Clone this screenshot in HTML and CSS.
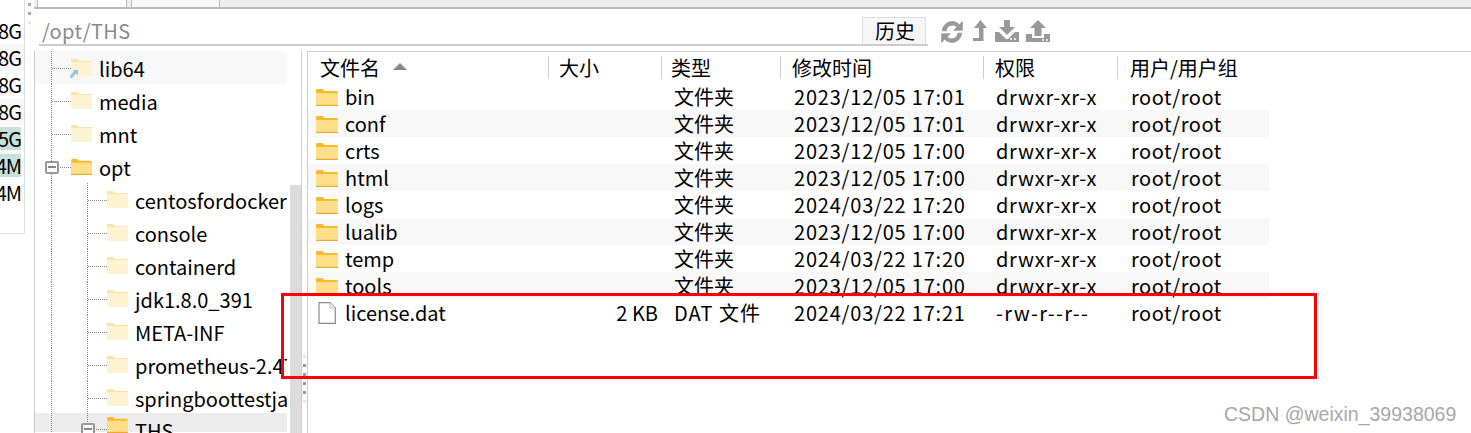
FILE: index.html
```html
<!DOCTYPE html>
<html lang="zh">
<head>
<meta charset="utf-8">
<title>/opt/THS</title>
<link rel="stylesheet" href="styles.css">
</head>
<body>
<svg class="defs" width="0" height="0" aria-hidden="true">
  <defs>
    <symbol id="folder" viewBox="0 0 22 18">
      <path d="M0 2.5C0 1.6.6 1 1.500 1h5L8.500 3H20.500C21.400 3 22 3.600 22 4.500V16.500C22 17.400 21.400 18 20.500 18H1.500C.6 18 0 17.400 0 16.500Z" fill="#fdb92e"/>
      <path d="M0 5H22V16.500C22 17.400 21.400 18 20.500 18H1.500C.6 18 0 17.400 0 16.500Z" fill="#fddf8a"/>
      <path d="M0 16.800H22V18H0Z" fill="#eeaa2e"/>
    </symbol>
    <symbol id="folder-pale" viewBox="0 0 21 17">
      <path d="M0 0H6L8 2H21V4H0Z" fill="#fbe3a6"/>
      <path d="M0 3H21V17H0Z" fill="#fef3d0"/>
    </symbol>
  </defs>
</svg>
<div class="app">
  <aside class="strip">
    <div class="usage"><span>8G</span></div>
    <div class="usage alt"><span>8G</span></div>
    <div class="usage"><span>8G</span></div>
    <div class="usage alt"><span>8G</span></div>
    <div class="usage hot"><span>5G</span></div>
    <div class="usage hot"><span>4M</span></div>
    <div class="usage"><span>4M</span></div>
  </aside>
  <div class="grip top-grip"><i></i><i></i><i></i></div>
  <main class="content">
    <div class="tabs"><div class="tab"></div><div class="tab"></div></div>
    <div class="toolbar">
      <div class="pathrow">
        <div class="path">/opt/THS</div>
        <button class="history">历史</button>
      </div>
      <div class="tools">
        <svg class="tool refresh" viewBox="2 2 18 18"><path d="M3 10C3.500 5.500 7 2.500 11 2.500C13.500 2.500 15.500 3.500 17 5L19.500 2.500V9.500H12.500L15 7C13.800 5.900 12.500 5.400 11 5.400C8.500 5.400 6.600 7.300 6.200 10ZM19 12C18.500 16.500 15 19.500 11 19.500C8.500 19.500 6.500 18.500 5 17L2.500 19.500V12.500H9.500L7 15C8.200 16.100 9.500 16.600 11 16.600C13.500 16.600 15.400 14.700 15.800 12Z"/></svg>
        <svg class="tool up" viewBox="0 0 14 21"><path d="M7.500 0L14 8H10.500V21H0V18H6V8H1Z"/></svg>
        <svg class="tool down" viewBox="0 0 24 22"><path d="M9 0H15V7H20L12 15L4 7H9ZM0 12H4L11 19H13L20 12H24V22H0Z"/><circle cx="16" cy="19" r="1" fill="#fff"/><circle cx="20" cy="19" r="1" fill="#fff"/></svg>
        <svg class="tool upl" viewBox="0 0 24 22"><path d="M12 0L20 8H15.500V16H8.500V8H4ZM0 14H6V18H18V14H24V22H0Z"/><circle cx="17" cy="20" r="1" fill="#fff"/><circle cx="21" cy="20" r="1" fill="#fff"/></svg>
      </div>
    </div>
    <div class="panes">
      <nav class="tree">
        <div class="node lv1 hover"><span class="tw"></span><span class="ico"><svg class="fi"><use href="#folder-pale"/></svg><svg class="link" viewBox="0 0 8 8"><path d="M3 0H8V5L6 3.500L2 8H0C0 5 1.500 3 4 2Z"/></svg></span><span class="label">lib64</span></div>
        <div class="node lv1"><span class="tw"></span><span class="ico"><svg class="fi"><use href="#folder-pale"/></svg></span><span class="label">media</span></div>
        <div class="node lv1"><span class="tw"></span><span class="ico"><svg class="fi"><use href="#folder-pale"/></svg></span><span class="label">mnt</span></div>
        <div class="node lv1 open"><span class="tw"><b class="minus"></b></span><span class="ico"><svg class="fi"><use href="#folder"/></svg></span><span class="label">opt</span></div>
        <div class="node lv2"><span class="tw"></span><span class="ico"><svg class="fi"><use href="#folder-pale"/></svg></span><span class="label">centosfordocker</span></div>
        <div class="node lv2"><span class="tw"></span><span class="ico"><svg class="fi"><use href="#folder-pale"/></svg></span><span class="label">console</span></div>
        <div class="node lv2"><span class="tw"></span><span class="ico"><svg class="fi"><use href="#folder-pale"/></svg></span><span class="label">containerd</span></div>
        <div class="node lv2"><span class="tw"></span><span class="ico"><svg class="fi"><use href="#folder-pale"/></svg></span><span class="label">jdk1.8.0_391</span></div>
        <div class="node lv2"><span class="tw"></span><span class="ico"><svg class="fi"><use href="#folder-pale"/></svg></span><span class="label">META-INF</span></div>
        <div class="node lv2"><span class="tw"></span><span class="ico"><svg class="fi"><use href="#folder-pale"/></svg></span><span class="label">prometheus-2.47.0</span></div>
        <div class="node lv2"><span class="tw"></span><span class="ico"><svg class="fi"><use href="#folder-pale"/></svg></span><span class="label">springboottestjar</span></div>
        <div class="node lv2 open selected"><span class="tw"><b class="minus"></b></span><span class="ico"><svg class="fi"><use href="#folder"/></svg></span><span class="label">THS</span></div>
      </nav>
      <div class="vscroll"><div class="thumb"></div></div>
      <div class="grip mid-grip"><i></i><i></i><i></i><i></i><i></i><i></i></div>
      <section class="files">
        <div class="frow head">
          <div class="c1">文件名<span class="sort"></span></div>
          <div class="c2">大小</div>
          <div class="c3">类型</div>
          <div class="c4">修改时间</div>
          <div class="c5">权限</div>
          <div class="c6">用户/用户组</div>
        </div>
        <div class="frow"><div class="c1"><svg class="ff"><use href="#folder"/></svg>bin</div><div class="c2"></div><div class="c3">文件夹</div><div class="c4">2023/12/05 17:01</div><div class="c5">drwxr-xr-x</div><div class="c6">root/root</div></div>
        <div class="frow"><div class="c1"><svg class="ff"><use href="#folder"/></svg>conf</div><div class="c2"></div><div class="c3">文件夹</div><div class="c4">2023/12/05 17:01</div><div class="c5">drwxr-xr-x</div><div class="c6">root/root</div></div>
        <div class="frow"><div class="c1"><svg class="ff"><use href="#folder"/></svg>crts</div><div class="c2"></div><div class="c3">文件夹</div><div class="c4">2023/12/05 17:00</div><div class="c5">drwxr-xr-x</div><div class="c6">root/root</div></div>
        <div class="frow"><div class="c1"><svg class="ff"><use href="#folder"/></svg>html</div><div class="c2"></div><div class="c3">文件夹</div><div class="c4">2023/12/05 17:00</div><div class="c5">drwxr-xr-x</div><div class="c6">root/root</div></div>
        <div class="frow"><div class="c1"><svg class="ff"><use href="#folder"/></svg>logs</div><div class="c2"></div><div class="c3">文件夹</div><div class="c4">2024/03/22 17:20</div><div class="c5">drwxr-xr-x</div><div class="c6">root/root</div></div>
        <div class="frow"><div class="c1"><svg class="ff"><use href="#folder"/></svg>lualib</div><div class="c2"></div><div class="c3">文件夹</div><div class="c4">2023/12/05 17:00</div><div class="c5">drwxr-xr-x</div><div class="c6">root/root</div></div>
        <div class="frow"><div class="c1"><svg class="ff"><use href="#folder"/></svg>temp</div><div class="c2"></div><div class="c3">文件夹</div><div class="c4">2024/03/22 17:20</div><div class="c5">drwxr-xr-x</div><div class="c6">root/root</div></div>
        <div class="frow"><div class="c1"><svg class="ff"><use href="#folder"/></svg>tools</div><div class="c2"></div><div class="c3">文件夹</div><div class="c4">2023/12/05 17:00</div><div class="c5">drwxr-xr-x</div><div class="c6">root/root</div></div>
        <div class="frow"><div class="c1"><svg class="ff doc" viewBox="0 0 18 22"><path d="M1 .7H12L17.300 6V21.300H1Z" fill="#fff" stroke="#8a8a8a" stroke-width="1.200"/><path d="M12 .7V6H17.300" fill="#f0f0f0" stroke="#bbb" stroke-width="1"/></svg>license.dat</div><div class="c2">2 KB</div><div class="c3 mixed">DAT 文件</div><div class="c4">2024/03/22 17:21</div><div class="c5 dashes">-rw-r--r--</div><div class="c6">root/root</div></div>
      </section>
    </div>
  </main>
  <div class="annotation"></div>
  <div class="watermark">CSDN @weixin_39938069</div>
</div>
</body>
</html>
```
FILE: styles.css
```css
* { box-sizing: border-box; }
html, body { margin: 0; padding: 0; background: #fff; }
.defs { position: absolute; }
.app {
  position: relative;
  display: flex;
  width: 1471px;
  height: 433px;
  overflow: hidden;
  font-family: "Noto Sans CJK SC", "Noto Sans", sans-serif;
  font-size: 20px;
  color: #000;
}

/* left usage strip */
.strip {
  width: 25px;
  height: 234px;
  padding-top: 17px;
  border-right: 1px solid #ddd;
  border-bottom: 1px solid #ddd;
  flex: none;
}
.usage {
  direction: rtl;
  height: 27px;
  line-height: 27px;
  padding-right: 3px;
  overflow: hidden;
  white-space: nowrap;
  letter-spacing: -1px;
}
.usage span { direction: ltr; unicode-bidi: isolate; }
.usage.alt { background: #f8f8f8; }
.usage.hot span { background: #c6e0da; display: block; height: 23px; line-height: 23px; margin-top: 2px; text-align: right; direction: rtl; }

/* grips */
.grip { display: flex; flex-direction: column; align-items: center; flex: none; }
.grip i { width: 3px; height: 3px; background: #aaa; display: block; }
.top-grip { width: 9px; gap: 6px; padding-top: 3px; }
.top-grip i:last-child { background: #e6e6e6; }

/* main column */
.content { flex: 1; min-width: 0; display: flex; flex-direction: column; }
.tabs {
  height: 9px;
  flex: none;
  display: flex;
  gap: 4px;
  padding-left: 3px;
  background: #eee;
  border-bottom: 2px solid #bbb;
}
.tab { width: 90px; background: #fff; border-left: 1px solid #bbb; border-right: 1px solid #bbb; }
.tab + .tab { width: 89px; background: #f8f8f8; }

.toolbar { height: 34px; margin-top: 8px; display: flex; flex: none; }
.pathrow {
  width: 889px;
  height: 29px;
  margin-left: 5px;
  display: flex;
  justify-content: space-between;
  border-bottom: 2px solid #ccc;
}
.path { color: #8a8a8a; padding-left: 3px; line-height: 28px; letter-spacing: .4px; }
.history {
  width: 64px;
  height: 28px;
  margin: 0 2px 0 0;
  padding: 0 0 0 2px;
  font: inherit;
  line-height: 26px;
  color: #000;
  background: #f6f6f6;
  border: 1px solid #ddd;
  border-bottom-color: #ccc;
}
.tools { display: flex; align-items: flex-start; margin-left: 13px; }
.tool { fill: #999; display: block; flex: none; }
.refresh { width: 22px; height: 22px; margin-top: 4px; stroke: #999; stroke-width: .7; }
.up { width: 14px; height: 21px; margin: 3px 0 0 10px; }
.down { width: 24px; height: 22px; margin: 3px 0 0 8px; }
.upl { width: 24px; height: 22px; margin: 3px 0 0 7px; }

/* panes */
.panes { flex: 1; min-height: 0; display: flex; }

.tree {
  width: 253px;
  flex: none;
  border-left: 1px solid #ccc;
  overflow: hidden;
}
.node {
  position: relative;
  height: 33px;
  display: flex;
  align-items: center;
  white-space: nowrap;
  overflow: hidden;
  line-height: 33px;
}
.node.hover { background: #f8f8f8; }
.node.selected { background: #ececec; height: 19px; overflow: visible; align-items: flex-start; margin-top: -1px; }
.node::before, .node .tw::before, .node .tw::after { content: ""; position: absolute; }
/* level 1 rail */
.node::before { left: 16px; top: 0; bottom: 0; border-left: 1px dotted #888; }
/* level 2 rail */
.lv2 .tw::before { left: 52px; top: 0; bottom: 0; border-left: 1px dotted #888; }
.tw::after { height: 0; top: 50%; border-top: 1px dotted #888; }
.lv1 .tw::after { left: 17px; width: 19px; }
.lv2 .tw::after { left: 53px; width: 19px; }
.selected .tw::after { top: 16px; }
.tw { flex: none; }
.lv1 .tw { width: 36px; }
.lv2 .tw { width: 72px; }
.ico { position: relative; width: 21px; height: 17px; flex: none; display: block; }
.fi { width: 21px; height: 17px; display: block; }
.link { position: absolute; left: -1px; bottom: -2px; width: 8px; height: 8px; fill: #8fc4ec; }
.label { margin: 2px 0 0 7px; }
.selected .ico { margin-top: 3px; }
.selected .label { line-height: 36px; margin-top: 0; }
.minus {
  position: absolute;
  z-index: 1;
  width: 14px;
  height: 13px;
  top: 50%;
  margin-top: -6px;
  background: #fff;
  border: 2px solid #999;
  border-radius: 2px;
}
.minus::after { content: ""; display: block; margin: 3px 1px 0; height: 2px; background: #888; }
.lv1 .minus { left: 10px; }
.lv2 .minus { left: 46px; top: 10px; margin-top: 0; }

.vscroll {
  width: 15px;
  flex: none;
  padding: 134px 0 0 3px;
  border-right: 1px solid #ccc;
}
.thumb { height: 100%; width: 11px; background: #dcdcdc; }

.mid-grip { width: 5px; gap: 6px; padding-top: 304px; }
.mid-grip i { background: #999; }
.mid-grip i:first-child, .mid-grip i:last-child { background: #e6e6e6; }

.files {
  flex: 1;
  min-width: 0;
  border-top: 1px solid #ccc;
  border-left: 1px solid #ccc;
}
.frow {
  display: grid;
  grid-template-columns: 240px 113px 119px 203px 134px 152px;
  width: 961px;
  height: 27px;
  line-height: 27px;
  white-space: nowrap;
}
.frow:nth-child(odd):not(.head) { background: #f8f8f8; }
.frow > div { min-width: 0; }
.c1 { display: flex; align-items: center; padding-left: 8px; }
.c2 { text-align: right; padding-right: 3px; }
.c3 { padding-left: 13px; }
.c4 { padding-left: 14px; letter-spacing: .8px; }
.c5 { padding-left: 13px; letter-spacing: .7px; }
.c6 { padding-left: 14px; letter-spacing: .55px; }
.c3.mixed { letter-spacing: 1px; }
.c5.dashes { letter-spacing: 1.3px; }
.ff { width: 22px; height: 18px; margin-right: 7px; flex: none; }
.ff.doc { width: 18px; height: 22px; margin: 0 9px 0 2px; }

.head { height: 31px; line-height: 32px; }
.head > div { position: relative; letter-spacing: 0; }
.head > div:not(.c1)::before {
  content: "";
  position: absolute;
  left: 0;
  top: 4px;
  height: 23px;
  border-left: 1px solid #ccc;
}
.head .c1 { padding-left: 12px; }
.head .c2 { text-align: left; padding: 0 0 0 11px; }
.head .c3 { padding-left: 10px; }
.head .c4 { padding-left: 12px; }
.head .c5 { padding-left: 12px; }
.head .c6 { padding-left: 13px; }
.sort {
  width: 0; height: 0;
  margin-left: 13px;
  margin-bottom: 4px;
  border-left: 7px solid transparent;
  border-right: 7px solid transparent;
  border-bottom: 7px solid #888;
}

/* overlays */
.annotation {
  position: absolute;
  left: 281px;
  top: 293px;
  width: 1036px;
  height: 86px;
  border: 3px solid #f00;
}
.watermark {
  position: absolute;
  left: 1224px;
  top: 403px;
  font-family: "Liberation Sans", sans-serif;
  font-size: 19.500px;
  line-height: 22px;
  color: #a8a8a8;
}
```
